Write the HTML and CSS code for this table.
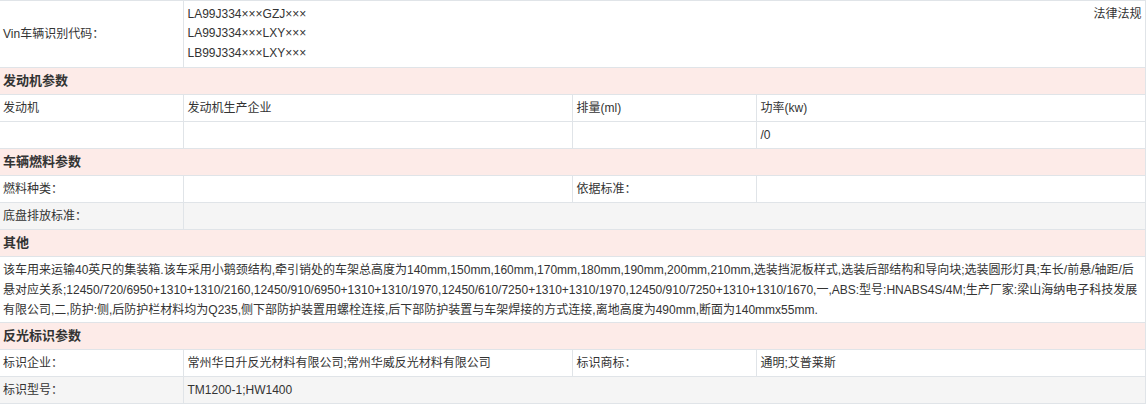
FILE: index.html
```html
<!DOCTYPE html>
<html lang="zh-CN">
<head>
<meta charset="utf-8">
<title>车辆参数</title>
<link rel="stylesheet" href="styles.css">
</head>
<body>
<table class="params">
  <colgroup>
    <col class="c1"><col class="c2"><col class="c3"><col class="c4">
  </colgroup>
  <tbody>
    <tr class="vin-row">
      <td>Vin车辆识别代码：</td>
      <td colspan="3" class="vin-cell">
        <span class="law">法律法规</span>
        <div class="vin-line">LA99J334×××GZJ×××</div>
        <div class="vin-line">LA99J334×××LXY×××</div>
        <div class="vin-line">LB99J334×××LXY×××</div>
      </td>
    </tr>
    <tr class="head"><td colspan="4">发动机参数</td></tr>
    <tr>
      <td>发动机</td>
      <td>发动机生产企业</td>
      <td>排量(ml)</td>
      <td>功率(kw)</td>
    </tr>
    <tr>
      <td></td>
      <td></td>
      <td></td>
      <td>/0</td>
    </tr>
    <tr class="head"><td colspan="4">车辆燃料参数</td></tr>
    <tr>
      <td>燃料种类：</td>
      <td></td>
      <td>依据标准：</td>
      <td></td>
    </tr>
    <tr class="alt">
      <td>底盘排放标准：</td>
      <td colspan="3"></td>
    </tr>
    <tr class="head"><td colspan="4">其他</td></tr>
    <tr class="text-row">
      <td colspan="4">该车用来运输40英尺的集装箱.该车采用小鹅颈结构,牵引销处的车架总高度为140mm,150mm,160mm,170mm,180mm,190mm,200mm,210mm,选装挡泥板样式,选装后部结构和导向块;选装圆形灯具;车长/前悬/轴距/后悬对应关系;12450/720/6950+1310+1310/2160,12450/910/6950+1310+1310/1970,12450/610/7250+1310+1310/1970,12450/910/7250+1310+1310/1670,一,ABS:型号:HNABS4S/4M;生产厂家:梁山海纳电子科技发展有限公司,二,防护:侧,后防护栏材料均为Q235,侧下部防护装置用螺栓连接,后下部防护装置与车架焊接的方式连接,离地高度为490mm,断面为140mmx55mm.</td>
    </tr>
    <tr class="head"><td colspan="4">反光标识参数</td></tr>
    <tr>
      <td>标识企业：</td>
      <td>常州华日升反光材料有限公司;常州华威反光材料有限公司</td>
      <td>标识商标：</td>
      <td>通明;艾普莱斯</td>
    </tr>
    <tr class="alt">
      <td>标识型号：</td>
      <td colspan="3">TM1200-1;HW1400</td>
    </tr>
  </tbody>
</table>
</body>
</html>
```

FILE: styles.css
```css
html, body {
  margin: 0;
  padding: 0;
  background: #ffffff;
}

body {
  font-family: "Liberation Sans", "Noto Sans CJK SC", sans-serif;
  font-size: 12px;
  color: #333333;
}

.params {
  width: 1145px;
  border-collapse: collapse;
  table-layout: fixed;
  border-top: 1px solid #e0e4e8;
}

.c1 { width: 183px; }
.c2 { width: 389px; }
.c3 { width: 184px; }
.c4 { width: 389px; }

.params td {
  border-right: 1px solid #e0e4e8;
  border-bottom: 1px solid #e0e4e8;
  height: 26px;
  padding: 0 4px;
  line-height: 20px;
  vertical-align: middle;
  box-sizing: content-box;
}

.params tr td:first-child {
  padding-left: 3px;
}

.vin-row td {
  height: 66px;
}

.vin-row td.vin-cell {
  height: 60px;
  padding-top: 3px;
  padding-bottom: 3px;
}

.vin-line {
  line-height: 19.5px;
}

.law {
  float: right;
  line-height: 19.5px;
  margin-right: -1px;
}

.head td {
  background: #fdebe8;
  font-weight: bold;
  font-size: 13px;
}

.alt td {
  background: #f5f5f5;
}

.text-row td {
  height: 60px;
  padding-top: 3px;
  padding-bottom: 2px;
  line-height: 20px;
}
```
